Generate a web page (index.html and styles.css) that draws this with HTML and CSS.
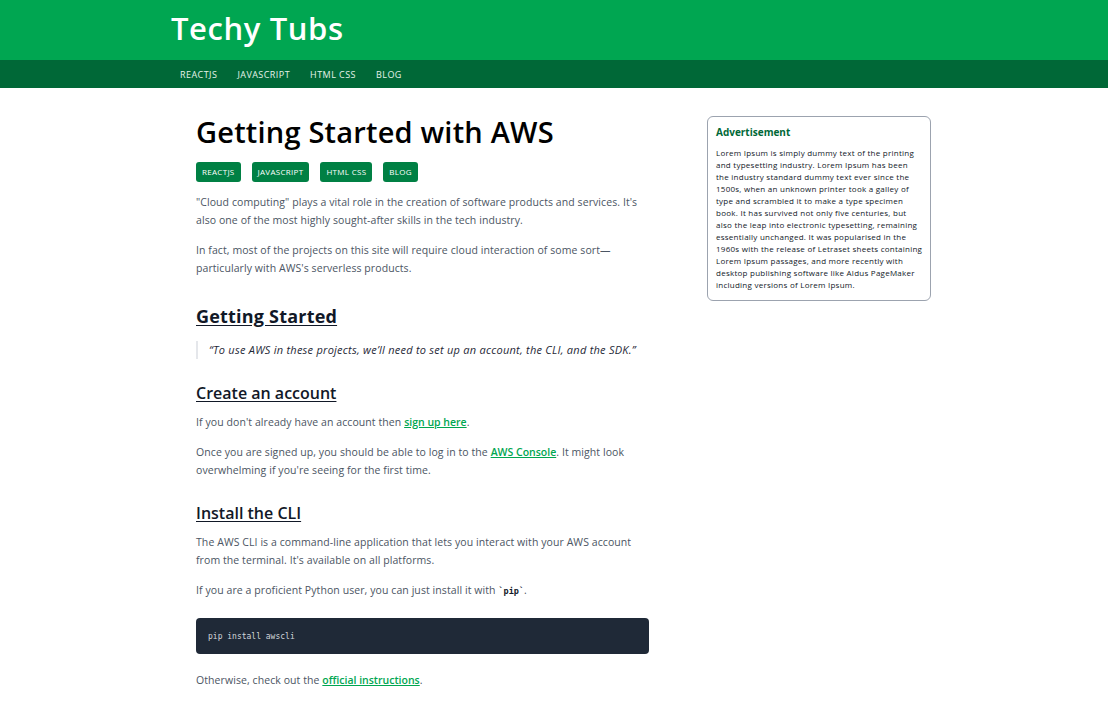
FILE: index.html
```html
<!DOCTYPE html>
<html lang="en">
<head>
<meta charset="utf-8">
<title>Getting Started with AWS - Techy Tubs</title>
<link rel="stylesheet" href="styles.css">
</head>
<body>
<header class="site-header">
  <div class="container">
    <h1 class="brand">Techy Tubs</h1>
  </div>
</header>
<nav class="site-nav">
  <div class="container nav-list">
    <a class="nav-link" href="#">REACTJS</a>
    <a class="nav-link" href="#">JAVASCRIPT</a>
    <a class="nav-link" href="#">HTML CSS</a>
    <a class="nav-link" href="#">BLOG</a>
  </div>
</nav>
<main class="container layout">
  <article class="post">
    <h1 class="post-title">Getting Started with AWS</h1>
    <div class="tags">
      <span class="tag">REACTJS</span>
      <span class="tag">JAVASCRIPT</span>
      <span class="tag">HTML CSS</span>
      <span class="tag">BLOG</span>
    </div>
    <p>"Cloud computing" plays a vital role in the creation of software products and services. It's also one of the most highly sought-after skills in the tech industry.</p>
    <p>In fact, most of the projects on this site will require cloud interaction of some sort—particularly with AWS's serverless products.</p>
    <h2 class="h2">Getting Started</h2>
    <blockquote class="quote">“To use AWS in these projects, we’ll need to set up an account, the CLI, and the SDK.”</blockquote>
    <h3 class="h3">Create an account</h3>
    <p>If you don't already have an account then <a class="link" href="#">sign up here</a>.</p>
    <p>Once you are signed up, you should be able to log in to the <a class="link" href="#">AWS Console</a>. It might look overwhelming if you're seeing for the first time.</p>
    <h3 class="h3">Install the CLI</h3>
    <p>The AWS CLI is a command-line application that lets you interact with your AWS account from the terminal. It's available on all platforms.</p>
    <p>If you are a proficient Python user, you can just install it with <code class="inline-code">`pip`</code>.</p>
    <pre class="code-block"><code>pip install awscli</code></pre>
    <p>Otherwise, check out the <a class="link" href="#">official instructions</a>.</p>
  </article>
  <aside class="ad">
    <h4 class="ad-title">Advertisement</h4>
    <p class="ad-text">Lorem Ipsum is simply dummy text of the printing<br>
and typesetting industry. Lorem Ipsum has been<br>
the industry standard dummy text ever since the<br>
1500s, when an unknown printer took a galley of<br>
type and scrambled it to make a type specimen<br>
book. It has survived not only five centuries, but<br>
also the leap into electronic typesetting, remaining<br>
essentially unchanged. It was popularised in the<br>
1960s with the release of Letraset sheets containing<br>
Lorem Ipsum passages, and more recently with<br>
desktop publishing software like Aldus PageMaker<br>
including versions of Lorem Ipsum.</p>
  </aside>
</main>
</body>
</html>
```
FILE: styles.css
```css
* { box-sizing: border-box; }
html, body { margin: 0; padding: 0; }
body {
  font-family: "Open Sans", "Liberation Sans", sans-serif;
  background: #ffffff;
  color: #374151;
}
.container {
  width: 768px;
  margin: 0 auto;
}
.site-header {
  background: #00a651;
  height: 60px;
}
.brand {
  margin: 0;
  font-size: 31px;
  line-height: 56px;
  font-weight: 600;
  color: #ffffff;
  padding-left: 1px;
  letter-spacing: 0.6px;
}
.site-nav {
  background: #006837;
  height: 28px;
}
.nav-list {
  display: flex;
  align-items: center;
  height: 28px;
  padding-left: 10px;
  gap: 20px;
}
.nav-link {
  color: #e5f3ea;
  font-size: 9px;
  font-weight: 500;
  text-decoration: none;
  letter-spacing: 0.45px;
}
.layout {
  display: flex;
  align-items: flex-start;
  padding: 26px 0 0 26px;
  gap: 58px;
}
.post {
  width: 453px;
  flex: none;
}
.post-title {
  margin: 0 0 12px;
  font-size: 29px;
  line-height: 36px;
  font-weight: 600;
  color: #000000;
  letter-spacing: 0.2px;
}
.tags {
  display: flex;
  gap: 11px;
  margin-bottom: 11px;
}
.tag {
  background: #008044;
  color: #ffffff;
  font-size: 8px;
  line-height: 20px;
  height: 20px;
  padding: 0 6px;
  border-radius: 3px;
  letter-spacing: 0.3px;
}
.post p {
  font-size: 10.5px;
  line-height: 18px;
  margin: 0 0 12px;
  color: #4b5563;
  letter-spacing: 0.08px;
}
.h2 {
  margin: 27px 0 13px;
  font-size: 18px;
  line-height: 24px;
  font-weight: 700;
  color: #111827;
  text-decoration: underline;
  text-underline-offset: 2px;
  letter-spacing: 0.2px;
}
.quote {
  margin: 0 0 23px;
  padding: 0 0 0 11px;
  border-left: 2px solid #e5e7eb;
  font-style: italic;
  font-size: 11px;
  line-height: 18px;
  color: #1f2937;
  letter-spacing: 0.25px;
}
.h3 {
  margin: 0 0 9px;
  font-size: 16px;
  line-height: 22px;
  font-weight: 600;
  color: #111827;
  text-decoration: underline;
  text-underline-offset: 2px;
}
.post p + .h3 { margin-top: 23px; }
.link {
  color: #00a651;
  font-weight: 600;
  text-decoration: underline;
  letter-spacing: 0;
}
.inline-code {
  font-family: "DejaVu Sans Mono", monospace;
  font-size: 8.5px;
  font-weight: 700;
  color: #111827;
  letter-spacing: 0;
}
.code-block {
  margin: 18px 0 17px;
  background: #1f2937;
  border-radius: 4px;
  height: 36px;
  padding: 0 12px;
  display: flex;
  align-items: center;
}
.code-block code {
  font-family: "DejaVu Sans Mono", monospace;
  font-size: 8px;
  color: #d1d5db;
}
.ad {
  width: 224px;
  flex: none;
  margin-top: 2px;
  border: 1px solid #9ca3af;
  border-radius: 6px;
  padding: 7px 8px 9px;
}
.ad-title {
  margin: 0 0 7px;
  font-size: 10px;
  line-height: 16px;
  font-weight: 700;
  color: #006837;
}
.ad-text {
  margin: 0;
  font-size: 8px;
  line-height: 12px;
  color: #111827;
  letter-spacing: 0.25px;
  white-space: nowrap;
}
```
